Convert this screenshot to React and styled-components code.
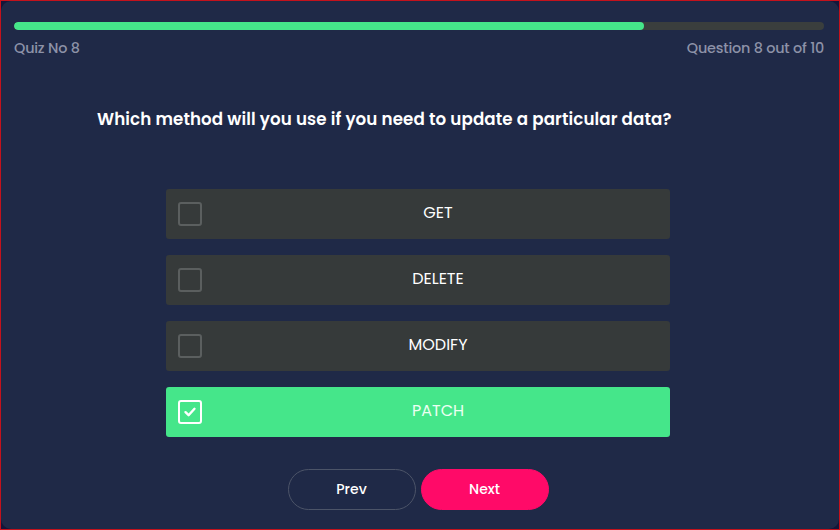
import React, { useState } from "react";
import styled, { createGlobalStyle } from "styled-components";

const GlobalStyle = createGlobalStyle`
  html, body {
    margin: 0;
    padding: 0;
    background: #14163a;
  }
  * {
    box-sizing: border-box;
  }
`;

const Frame = styled.div`
  width: 840px;
  height: 530px;
  border: 1px solid #c4121c;
  background: #14163a;
  font-family: "Poppins", Inter, "Noto Sans", sans-serif;
`;

const Card = styled.div`
  height: 100%;
  border-radius: 10px;
  background: #1f2947;
  padding: 21px 15px 0 13px;
  display: flex;
  flex-direction: column;
`;

const Track = styled.div`
  height: 8px;
  border-radius: 4px;
  background: #3a3e3d;
  overflow: hidden;
`;

const Fill = styled.div`
  height: 100%;
  border-radius: 4px;
  background: #45e68a;
`;

const Meta = styled.div`
  display: flex;
  justify-content: space-between;
  margin-top: 8px;
  color: #8d92a8;
  font-size: 14.4px;
  font-weight: 500;
  letter-spacing: -0.2px;
`;

const Question = styled.h2`
  margin: 47px 0 0;
  padding-left: 83px;
  text-align: left;
  color: #ffffff;
  font-size: 16.7px;
  font-weight: 600;
  letter-spacing: 0.1px;
`;

const Options = styled.div`
  display: flex;
  flex-direction: column;
  gap: 16px;
  width: 504px;
  margin: 57px auto 0;
  position: relative;
  left: -1px;
`;

const Option = styled.button`
  display: flex;
  align-items: center;
  height: 50px;
  border: none;
  border-radius: 3px;
  padding: 0 0 4px 12px;
  background: ${(p) => (p.$active ? "#45e68a" : "#363a3a")};
  color: ${(p) => (p.$active ? "#ecfff2" : "#ffffff")};
  font-family: inherit;
  font-size: 16px;
  font-weight: 400;
  cursor: pointer;
`;

const Box = styled.span`
  flex: 0 0 24px;
  width: 24px;
  height: 24px;
  margin-top: 4px;
  border-radius: 3px;
  border: 2px solid ${(p) => (p.$active ? "#ffffff" : "#5b5f5f")};
  display: flex;
  align-items: center;
  justify-content: center;
`;

const Label = styled.span`
  flex: 1;
  text-align: center;
  padding-left: 4px;
`;

const Nav = styled.div`
  display: flex;
  justify-content: center;
  gap: 5px;
  margin-top: 32px;
  position: relative;
  left: -1px;
`;

const NavButton = styled.button`
  width: 128px;
  height: 41px;
  border-radius: 21px;
  border: 1px solid ${(p) => (p.$primary ? "#ff0a68" : "#4c5468")};
  background: ${(p) => (p.$primary ? "#ff0a68" : "transparent")};
  color: #ffffff;
  font-family: inherit;
  font-size: 14px;
  font-weight: 500;
  cursor: pointer;
`;

const Check = () => (
  <svg width="14" height="14" viewBox="0 0 14 14" fill="none">
    <path
      d="M2.5 7.2 L5.6 10.2 L11.5 3.8"
      stroke="#ffffff"
      strokeWidth="2.4"
      strokeLinecap="round"
      strokeLinejoin="round"
    />
  </svg>
);

const answers = ["GET", "DELETE", "MODIFY", "PATCH"];

export default function App() {
  const [picked, setPicked] = useState(3);
  return (
    <>
      <GlobalStyle />
      <Frame>
        <Card>
          <Track>
            <Fill style={{ width: `${(8 / 10) * 97.2}%` }} />
          </Track>
          <Meta>
            <span>Quiz No 8</span>
            <span>Question 8 out of 10</span>
          </Meta>
          <Question>
            Which method will you use if you need to update a particular data?
          </Question>
          <Options>
            {answers.map((a, i) => (
              <Option key={a} $active={picked === i} onClick={() => setPicked(i)}>
                <Box $active={picked === i}>{picked === i && <Check />}</Box>
                <Label>{a}</Label>
              </Option>
            ))}
          </Options>
          <Nav>
            <NavButton>Prev</NavButton>
            <NavButton $primary>Next</NavButton>
          </Nav>
        </Card>
      </Frame>
    </>
  );
}
